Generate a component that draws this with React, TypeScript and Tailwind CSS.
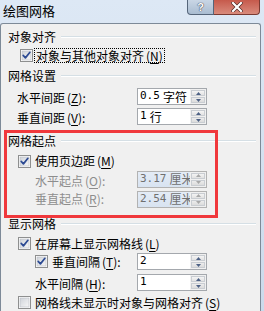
import React from "react";

function Check({ checked }: { checked: boolean }) {
  return (
    <svg width="13" height="13" viewBox="0 0 13 13" className="shrink-0">
      <defs>
        <linearGradient id="cbg" x1="0" y1="0" x2="1" y2="1">
          <stop offset="0" stopColor="#cfd3d9" />
          <stop offset="1" stopColor="#f7f7f7" />
        </linearGradient>
      </defs>
      <rect x="0.5" y="0.5" width="12" height="12" fill="#ffffff" stroke="#8e8f8f" />
      <rect x="2" y="2" width="9" height="9" fill="url(#cbg)" stroke="#b9bdc3" strokeWidth="0.6" />
      {checked && (
        <path d="M3.2 6.4 L5.4 8.9 L9.9 3.3" fill="none" stroke="#2c4a93" strokeWidth="1.7" strokeLinecap="round" strokeLinejoin="round" />
      )}
    </svg>
  );
}

function Spin({ num, unit, disabled }: { num: string; unit?: string; disabled?: boolean }) {
  const arrow = disabled ? "#a8a8a8" : "#4d6185";
  return (
    <div className={`flex h-[17px] w-[70px] shrink-0 border ${disabled ? "border-[#b2b2b2]" : "border-[#a4a8ad]"}`}>
      <div
        className={`flex-1 flex items-center pl-[2px] overflow-hidden whitespace-nowrap ${
          disabled ? "bg-[linear-gradient(#e4ecf6,#d8e3f1)] text-[#707070]" : "bg-white text-black"
        }`}
      >
        <span className="font-['DejaVu_Sans_Mono',monospace] text-[11px]">{num}</span>
        {unit && <span className="ml-[3px]">{unit}</span>}
      </div>
      <div className="w-[16px] flex flex-col bg-[#f0f0f0] p-[1px] gap-[1px]">
        <div className="flex-1 flex items-center justify-center border border-[#c9cdd2] bg-[linear-gradient(#f4f4f4,#e2e2e2)]">
          <svg width="5" height="3" viewBox="0 0 5 3"><path d="M0 3 L2.5 0 L5 3 Z" fill={arrow} /></svg>
        </div>
        <div className="flex-1 flex items-center justify-center border border-[#c9cdd2] bg-[linear-gradient(#ececec,#dcdcdc)]">
          <svg width="5" height="3" viewBox="0 0 5 3"><path d="M0 0 L2.5 3 L5 0 Z" fill={arrow} /></svg>
        </div>
      </div>
    </div>
  );
}

function Header({ title, mt }: { title: string; mt: string }) {
  return (
    <div className={`flex items-center h-[17px] pl-[7px] pr-[4px] ${mt}`}>
      <span className="leading-none">{title}</span>
      <div className="flex-1 ml-[5px] border-t border-[#d5dfe5] border-b border-b-white" />
    </div>
  );
}

function Key({ k }: { k: string }) {
  return (
    <span className="ml-[2px]">
      (<span className="underline underline-offset-2">{k}</span>)
    </span>
  );
}

export default function App() {
  return (
    <div className="w-[264px] h-[311px] overflow-hidden bg-[linear-gradient(#dde8f5,#cbdaeb)] font-['Noto_Sans_CJK_SC',sans-serif] text-[12px] text-black">
      {/* title bar */}
      <div className="h-[23px] flex items-start">
        <div className="pl-[3px] pt-[2px] text-[13px] leading-[17px]">绘图网格</div>
        <div className="ml-auto mr-[4px] flex">
          <div className="w-[27px] h-[15px] flex items-center justify-center border border-[#55657a] border-t-0 rounded-bl-[4px] bg-[linear-gradient(#c9d6e5,#a9bcd1)]">
            <span className="font-['Liberation_Sans',sans-serif] text-white text-[11px] font-bold leading-[12px] [text-shadow:0_0_1px_#334,0_0_1px_#334]">?</span>
          </div>
          <div className="w-[46px] h-[15px] flex items-center justify-center border border-[#7a3a32] border-t-0 border-l-0 rounded-br-[4px] bg-[linear-gradient(#c65a4c,#d98b7c)]">
            <svg width="12" height="10" viewBox="0 0 12 10">
              <path d="M2 1 L10 9 M10 1 L2 9" stroke="#4a2420" strokeWidth="3.4" strokeLinecap="square" />
              <path d="M2 1 L10 9 M10 1 L2 9" stroke="#ffffff" strokeWidth="2.2" strokeLinecap="square" />
            </svg>
          </div>
        </div>
      </div>

      {/* body */}
      <div className="relative mr-[3px] h-[288px] border-l border-t border-r border-[#7d8a98] rounded-t-[3px] bg-[#f0f0f0] flex flex-col">
        <Header title="对象对齐" mt="mt-[5px]" />
        <div className="flex items-center h-[17px] mt-[2px] pl-[19px]">
          <Check checked />
          <div className="ml-[1px] px-[1px] h-[15px] flex items-center border border-dotted border-black whitespace-nowrap">
            对象与其他对象对齐<Key k="N" />
          </div>
        </div>

        <Header title="网格设置" mt="mt-[4px]" />
        <div className="flex items-center h-[17px] mt-[4px] pl-[16px]">
          <div className="w-[120px] whitespace-nowrap pt-[3px]">水平间距<Key k="Z" />:</div>
          <Spin num="0.5" unit="字符" />
        </div>
        <div className="flex items-center h-[17px] mt-[3px] pl-[16px]">
          <div className="w-[120px] whitespace-nowrap pt-[3px]">垂直间距<Key k="V" />:</div>
          <Spin num="1" unit="行" />
        </div>

        <Header title="网格起点" mt="mt-[8px]" />
        <div className="flex items-center h-[17px] mt-[3px] pl-[17px]">
          <Check checked />
          <div className="ml-[4px] whitespace-nowrap">使用页边距<Key k="M" /></div>
        </div>
        <div className="flex items-center h-[17px] mt-[1px] pl-[34px]">
          <div className="w-[102px] whitespace-nowrap text-[#8d8d8d] pt-[3px]">水平起点<Key k="O" />:</div>
          <Spin num="3.17" unit="厘米" disabled />
        </div>
        <div className="flex items-center h-[17px] mt-[3px] pl-[34px]">
          <div className="w-[102px] whitespace-nowrap text-[#8d8d8d]">垂直起点<Key k="R" />:</div>
          <Spin num="2.54" unit="厘米" disabled />
        </div>

        <Header title="显示网格" mt="mt-[8px]" />
        <div className="flex items-center h-[17px] mt-[3px] pl-[17px]">
          <Check checked />
          <div className="ml-[4px] whitespace-nowrap">在屏幕上显示网格线<Key k="L" /></div>
        </div>
        <div className="flex items-center h-[17px] mt-[1px] pl-[34px]">
          <Check checked />
          <div className="ml-[4px] w-[85px] whitespace-nowrap">垂直间隔<Key k="T" />:</div>
          <Spin num="2" />
        </div>
        <div className="flex items-center h-[17px] mt-[4px] pl-[34px]">
          <div className="w-[102px] whitespace-nowrap pt-[2px]">水平间隔<Key k="H" />:</div>
          <Spin num="1" />
        </div>
        <div className="flex items-center h-[17px] mt-[3px] pl-[17px]">
          <Check checked={false} />
          <div className="ml-[4px] whitespace-nowrap">网格线未显示时对象与网格对齐<Key k="S" /></div>
        </div>

        {/* red annotation box */}
        <div className="absolute left-[3px] top-[106px] w-[214px] h-[88px] border-[3px] border-[#f0383c] pointer-events-none" />
      </div>
    </div>
  );
}
